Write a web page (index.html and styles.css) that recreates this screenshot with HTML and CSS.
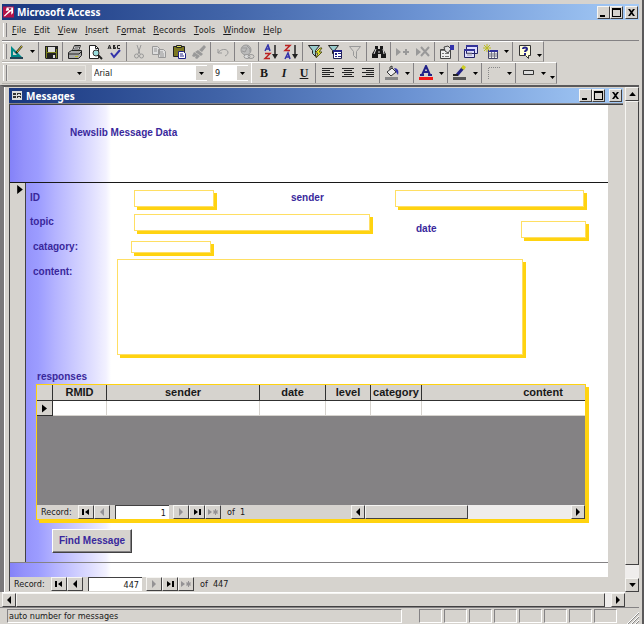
FILE: index.html
```html
<!DOCTYPE html>
<html lang="en">
<head>
<meta charset="utf-8">
<title>Microsoft Access</title>
<link rel="stylesheet" href="styles.css">
</head>
<body>
<svg class="defs" aria-hidden="true">
  <symbol id="down" viewBox="0 0 5 3"><path d="M0 0h5L2.500 3z"/></symbol>
  <symbol id="first" viewBox="0 0 10 8"><path d="M1 1h2v6H1zM8 1v6L4 4z"/></symbol>
  <symbol id="prev" viewBox="0 0 10 8"><path d="M7 0v8L3 4z"/></symbol>
  <symbol id="next" viewBox="0 0 10 8"><path d="M3 0v8l4-4z"/></symbol>
  <symbol id="last" viewBox="0 0 10 8"><path d="M2 1v6l4-3zM7 1h2v6H7z"/></symbol>
  <symbol id="new" viewBox="0 0 10 8"><path d="M0 1v6l4-3zM7 1h1v2l1-1 1 1-1 1 1 1-1 1-1-1v2H7V5L6 6 5 5l1-1-1-1 1-1 1 1z"/></symbol>
  <symbol id="min" viewBox="0 0 9 9"><path d="M1 7h5v2H1z"/></symbol>
  <symbol id="max" viewBox="0 0 9 9"><path d="M0 0h9v9H0zM1 2v6h7V2z" fill-rule="evenodd"/></symbol>
  <symbol id="close" viewBox="0 0 9 9"><path d="M1 1h2l1.500 2L6 1h2L5.500 4.500 8 8H6L4.500 6 3 8H1l2.500-3.500z"/></symbol>
</svg>

<header class="titlebar">
  <svg class="app-icon" viewBox="0 0 12 12"><path fill="#b51248" d="M0 0h12v12H0z"/><path fill="#fff" d="M4 1h7v6L9 9V5L4 9 2 11 1 10l6-6-4 1z"/><path fill="#8c0834" d="M6 2h3v1L7 4z"/></svg>
  <h1>Microsoft Access</h1>
  <div class="winbtns">
    <button aria-label="Minimize"><svg><use href="#min"/></svg></button><button aria-label="Maximize"><svg><use href="#max"/></svg></button><button class="x" aria-label="Close"><svg><use href="#close"/></svg></button>
  </div>
</header>

<nav class="menu">
  <button><u>F</u>ile</button><button><u>E</u>dit</button><button><u>V</u>iew</button><button><u>I</u>nsert</button><button>F<u>o</u>rmat</button><button><u>R</u>ecords</button><button><u>T</u>ools</button><button><u>W</u>indow</button><button><u>H</u>elp</button>
</nav>

<div class="toolbar" role="toolbar" aria-label="Form view">
  <div class="group">
    <button aria-label="View"><svg viewBox="0 0 16 16"><path fill="#088" d="M2 2v11h11zM4 7l4 4H4z" fill-rule="evenodd"/><path fill="#245" d="M1 13h13v2H1z"/><path stroke="#222" stroke-width="2" d="M7 9l6-7"/><path stroke="#dc3" d="M8 8l5-6"/></svg></button>
    <button class="drop" aria-label="View options"><svg><use href="#down"/></svg></button>
  </div>
  <div class="group">
    <button aria-label="Save"><svg viewBox="0 0 16 16"><path fill="#222" d="M2 2h13v13H3l-1-1z"/><path fill="#7d8420" d="M3 3h1v11H3zM13 5h1v9h-1zM4 8h9v1H4z"/><path fill="#ddd" d="M5 3h7v5H5zM10 11h2v3h-2z"/></svg></button>
  </div>
  <div class="group">
    <button aria-label="Print"><svg viewBox="0 0 16 16"><path fill="#fff" stroke="#222" d="M5.500 6.500l2-5h6l-2 5"/><path fill="#aaa" stroke="#222" d="M1.500 8.500l3-2h10v5l-3 3h-10z"/><path stroke="#222" d="M2 10h10l2-2M8 3h4M7 5h4" fill="none"/><path fill="#bb2" d="M8 12h3v1H8z"/></svg></button>
    <button aria-label="Print Preview"><svg viewBox="0 0 16 16"><path fill="#fff" stroke="#222" d="M2.500 1.500h6l3 3v10h-9z"/><path d="M8.500 1.500v3h3" fill="none" stroke="#222"/><circle cx="9" cy="9" r="3" fill="#9dd" stroke="#333"/><path stroke="#222" stroke-width="2" d="M11 11l4 4"/></svg></button>
    <button aria-label="Spelling"><svg viewBox="0 0 16 16"><path fill="none" stroke="#222" d="M1 5l1.500-4L4 5M2 4h2M6.500 1v4M6 1.500h2L7 3l2 1-1 .500H6M13 1.500h-2.500v3H13"/><path fill="none" stroke="#33a" stroke-width="2" d="M4 9l3 4 6-7"/></svg></button>
  </div>
  <div class="group">
    <button aria-label="Cut" disabled><svg viewBox="0 0 16 16" fill="none" stroke="#999"><path d="M6 1l3 9M10 1L7 10"/><circle cx="5.500" cy="12" r="2"/><circle cx="10.500" cy="12" r="2"/></svg></button>
    <button aria-label="Copy" disabled><svg viewBox="0 0 16 16" fill="#ddd" stroke="#999"><path d="M1.500 2.500h5l2 2v6h-7zM7.500 5.500h5l2 2v6h-7z"/><path d="M3 5h3M3 7h3M9 8h3M9 10h4M9 12h4"/></svg></button>
    <button aria-label="Paste"><svg viewBox="0 0 16 16"><path fill="#7b7720" stroke="#222" d="M2.500 2.500h11v10h-11z"/><path fill="#dd5" stroke="#222" d="M5.500 3.500v-2h5v2z"/><path fill="#fff" stroke="#228" d="M7.500 7.500h5l2 2v5h-7z"/><path stroke="#228" d="M9 10h3M9 12h4"/></svg></button>
    <button aria-label="Format Painter" disabled><svg viewBox="0 0 16 16"><path fill="#999" d="M13 1l2 2-4 5-3-2zM7 6l5 4-2 2-6-4zM3 8l6 4-3 3-2-1 1-2-2 1-2-1z"/></svg></button>
  </div>
  <div class="group">
    <button aria-label="Undo" disabled><svg viewBox="0 0 16 16"><path fill="none" stroke="#999" stroke-width="1" d="M3 9c2-4 9-5 10-1 0 2-1 3-3 4M3 5v4h4"/></svg></button>
  </div>
  <div class="group">
    <button aria-label="Insert Hyperlink" disabled><svg viewBox="0 0 16 16" fill="none" stroke="#999"><circle cx="7" cy="6" r="5" fill="#bbb"/><path d="M3 4h5l-2 4-3-1M8 2l3 3v3"/><ellipse cx="8" cy="12.500" rx="3" ry="2" fill="#ddd"/><ellipse cx="12" cy="12.500" rx="3" ry="2"/></svg></button>
  </div>
  <div class="group">
    <button aria-label="Sort Ascending"><svg viewBox="0 0 16 16" fill="none"><path stroke="#33a" stroke-width="1.500" d="M2 7l3-6 2 6M3 5h4"/><path stroke="#b22" stroke-width="1.500" d="M2 9.500h5L2 14.500h5"/><path stroke="#222" stroke-width="1.500" d="M12 1v12"/><path fill="#222" d="M9 10h6l-3 5z"/></svg></button>
    <button aria-label="Sort Descending"><svg viewBox="0 0 16 16" fill="none"><path stroke="#b22" stroke-width="1.500" d="M2 1.500h5L2 6.500h5"/><path stroke="#33a" stroke-width="1.500" d="M2 15l3-6 2 6M3 13h4"/><path stroke="#222" stroke-width="1.500" d="M12 1v12"/><path fill="#222" d="M9 10h6l-3 5z"/></svg></button>
  </div>
  <div class="group">
    <button aria-label="Filter By Selection"><svg viewBox="0 0 16 16"><path fill="#9cc" stroke="#222" d="M1.500 1.500h11l-4 5v6l-3-3v-3z"/><path fill="#ee2" stroke="#552" d="M13 4l-5 5h3l-2 5 6-6h-3l3-4z"/></svg></button>
    <button aria-label="Filter By Form"><svg viewBox="0 0 16 16"><path fill="#9cc" stroke="#222" d="M1.500 1.500h10l-4 5v5l-2-2v-3z"/><path fill="#fff" stroke="#225" d="M6.500 6.500h8v8h-8z"/><path fill="#228" d="M6 6h9v2H6zM8 9h2v2H8zM11 9h3v1h-3zM8 12h2v1H8zM11 12h3v1h-3z"/></svg></button>
    <button aria-label="Apply Filter" disabled><svg viewBox="0 0 16 16"><path fill="none" stroke="#999" d="M2.500 2.500h11l-4 5v7l-3-3v-4z"/></svg></button>
  </div>
  <div class="group">
    <button aria-label="Find"><svg viewBox="0 0 16 16"><path fill="#181818" d="M4 2h3v3h2V2h3v3l3 5v4h-5v-4H7v4H1v-4l3-5z"/><path stroke="#ddd" d="M5 5L3 10M12 5l1 5M8 7v2"/></svg></button>
  </div>
  <div class="group">
    <button aria-label="New Record" disabled><svg viewBox="0 0 16 16" fill="#999"><path d="M1 4v8l5-4zM8 7h2V5h2v2h2v2h-2v2h-2V9H8z"/></svg></button>
    <button aria-label="Delete Record" disabled><svg viewBox="0 0 16 16" fill="#999"><path d="M1 4v8l5-4z"/><path stroke="#999" stroke-width="2" d="M6 3l8 9M14 3l-8 9"/></svg></button>
  </div>
  <div class="group">
    <button aria-label="Properties"><svg viewBox="0 0 16 16"><path fill="#eee" stroke="#444" d="M1.500 5.500h10v9h-10z"/><path fill="#777" d="M2 6h9v1H2zM3 9h2v1H3zM6 9h4v1H6zM3 12h2v1H3zM6 12h4v1H6z"/><path fill="#ddd" stroke="#444" d="M5 3l4-1 3 3-3 4-3-2z"/><path fill="#33a" d="M11 1h4v5h-4z"/></svg></button>
  </div>
  <div class="group">
    <button aria-label="Database Window"><svg viewBox="0 0 16 16"><path fill="#ddf" stroke="#226" d="M3.500 1.500h11v8h-11zM1.500 5.500h10v8h-10z"/><path fill="#339" d="M3 1h12v2H3zM1 5h11v2H1z"/><path stroke="#999" d="M4 9h5M4 11h5"/></svg></button>
    <button aria-label="New Object"><svg viewBox="0 0 16 16"><path fill="#eee" stroke="#446" d="M5.500 6.500h9v8h-9z"/><path fill="#339" d="M5 6h10v2H5z"/><path stroke="#778" d="M6 10h8M6 12h8M8.500 8v6M11.500 8v6"/><path stroke="#bb2" d="M4 0v8M0 4h8M1 1l6 6M7 1L1 7"/></svg></button>
    <button class="drop" aria-label="New Object options"><svg><use href="#down"/></svg></button>
  </div>
  <div class="group">
    <button aria-label="Help"><svg viewBox="0 0 16 16"><path fill="#ffffd8" stroke="#333" d="M2.500 1.500h11v10h-2v3l-3-3h-6z"/><path fill="none" stroke="#228" stroke-width="2" d="M6 5c0-2 4-2 4 0S8 6 8 8"/><path fill="#228" d="M7 9h2v2H7z"/></svg></button>
    <button class="drop more" aria-label="More Buttons"><svg><use href="#down"/></svg></button>
  </div>
</div>

<div class="toolbar" role="toolbar" aria-label="Formatting">
  <label class="combo object"><select aria-label="Object"><option></option></select><svg><use href="#down"/></svg></label>
  <label class="combo font"><select aria-label="Font"><option>Arial</option></select><svg><use href="#down"/></svg></label>
  <label class="combo size"><select aria-label="Font Size"><option>9</option></select><svg><use href="#down"/></svg></label>
  <div class="group lead">
    <button class="letter">B</button><button class="letter"><i>I</i></button><button class="letter"><u>U</u></button>
  </div>
  <div class="group">
    <button aria-label="Align Left"><svg viewBox="0 0 16 16"><path stroke="#222" d="M2 3.500h12M2 5.500h8M2 7.500h12M2 9.500h8M2 11.500h12"/></svg></button>
    <button aria-label="Center"><svg viewBox="0 0 16 16"><path stroke="#222" d="M2 3.500h12M4 5.500h8M2 7.500h12M4 9.500h8M2 11.500h12"/></svg></button>
    <button aria-label="Align Right"><svg viewBox="0 0 16 16"><path stroke="#222" d="M2 3.500h12M6 5.500h8M2 7.500h12M6 9.500h8M2 11.500h12"/></svg></button>
  </div>
  <div class="group">
    <button aria-label="Fill Color"><svg viewBox="0 0 16 16"><path fill="#eee" stroke="#333" d="M3 7l5-4 4 4-5 4zM6 5V2l2-1v3"/><path fill="#33a" d="M10 3c4 0 5 3 4 7l-2-3z"/><path fill="#888" d="M1 12h13v3H1z"/></svg></button>
    <button class="drop" aria-label="Fill options"><svg><use href="#down"/></svg></button>
  </div>
  <div class="group">
    <button aria-label="Font Color"><svg viewBox="0 0 16 16"><path fill="none" stroke="#228" stroke-width="2" d="M4 10l4-9 4 9M6 7h4M2 10h4M10 10h4"/><path fill="#f01818" d="M1 12h14v3H1z"/></svg></button>
    <button class="drop" aria-label="Font color options"><svg><use href="#down"/></svg></button>
  </div>
  <div class="group">
    <button aria-label="Line Color"><svg viewBox="0 0 16 16"><path stroke="#228" stroke-width="3" d="M5 10l6-7"/><path stroke="#222" stroke-width="2" d="M1 10h5"/><path fill="#cc2" d="M11 0l3 2-2 3-3-2z"/><path fill="#555" d="M1 12h13v3H1z"/></svg></button>
    <button class="drop" aria-label="Line color options"><svg><use href="#down"/></svg></button>
  </div>
  <div class="group">
    <button aria-label="Border Width"><svg viewBox="0 0 16 16"><path fill="none" stroke="#888" stroke-dasharray="1 1" d="M2.500 14V2.500H14"/></svg></button>
    <button class="drop" aria-label="Border options"><svg><use href="#down"/></svg></button>
  </div>
  <div class="group">
    <button aria-label="Special Effect"><svg viewBox="0 0 16 16"><path fill="#ddd" stroke="#333" d="M3.500 5.500h10v4h-10z"/></svg></button>
    <button class="drop" aria-label="Effect options"><svg><use href="#down"/></svg></button>
    <button class="drop more" aria-label="More Buttons"><svg><use href="#down"/></svg></button>
  </div>
</div>

<div class="workspace">
  <main class="window">
    <header class="titlebar inner">
      <svg class="form-icon" viewBox="0 0 10 9"><path fill="#ddd" d="M0 0h10v9H0z"/><path fill="#333" d="M1 2h3v2H1zM5 2h4v2H5zM1 5h3v2H1zM5 5h4v2H5z"/><path fill="#ddd" d="M6 3h2v1H6zM6 6h2v1H6z"/></svg>
      <h2>Messages</h2>
      <div class="winbtns">
        <button aria-label="Minimize"><svg><use href="#min"/></svg></button><button aria-label="Maximize"><svg><use href="#max"/></svg></button><button class="x" aria-label="Close"><svg><use href="#close"/></svg></button>
      </div>
    </header>
    <div class="client">
      <form class="form">
        <div class="form-header">Newslib Message Data</div>
        <div class="detail">
          <div class="selector"><svg viewBox="0 0 5 8"><path d="M0 0v8l5-4z"/></svg></div>
          <div class="fields">
            <div class="row ids">
              <label for="id">ID</label><input id="id">
              <label class="second" for="sender">sender</label><input id="sender">
            </div>
            <div class="row topics">
              <label for="topic">topic</label><input id="topic">
              <label class="date" for="date">date</label><input class="date" id="date">
            </div>
            <div class="row category">
              <label for="cat">catagory:</label><input id="cat">
            </div>
            <div class="row content">
              <label for="content">content:</label><textarea id="content"></textarea>
            </div>
            <h3>responses</h3>
            <section class="subform">
              <div class="sheet">
                <table>
                  <colgroup><col class="c-sel"><col class="c-id"><col class="c-sender"><col class="c-date"><col class="c-level"><col class="c-cat"><col class="c-content"></colgroup>
                  <thead><tr><th></th><th>RMID</th><th>sender</th><th>date</th><th>level</th><th>category</th><th>content</th></tr></thead>
                  <tbody><tr><th><svg viewBox="0 0 5 8"><path d="M0 0v8l5-4z"/></svg></th><td></td><td></td><td></td><td></td><td></td><td></td></tr></tbody>
                </table>
              </div>
              <div class="recnav">
                <label for="rec1">Record:</label>
                <button type="button" aria-label="First"><svg><use href="#first"/></svg></button><button type="button" aria-label="Previous" disabled><svg><use href="#prev"/></svg></button>
                <input id="rec1" value="1">
                <button type="button" aria-label="Next" disabled><svg><use href="#next"/></svg></button><button type="button" aria-label="Last"><svg><use href="#last"/></svg></button><button type="button" aria-label="New" disabled><svg><use href="#new"/></svg></button>
                <span class="of">of&nbsp; 1</span>
                <div class="hscroll">
                  <button type="button" aria-label="Scroll left"><svg><use href="#prev"/></svg></button><div class="thumb"></div><div class="track"></div><button type="button" aria-label="Scroll right"><svg><use href="#next"/></svg></button>
                </div>
              </div>
            </section>
            <button type="button" class="find">Find Message</button>
          </div>
        </div>
        <div class="form-footer"></div>
      </form>
      <div class="recnav outer">
        <label for="rec2">Record:</label>
        <button aria-label="First"><svg><use href="#first"/></svg></button><button aria-label="Previous"><svg><use href="#prev"/></svg></button>
        <input id="rec2" value="447">
        <button aria-label="Next" disabled><svg><use href="#next"/></svg></button><button aria-label="Last"><svg><use href="#last"/></svg></button><button aria-label="New" disabled><svg><use href="#new"/></svg></button>
        <span class="of">of&nbsp; 447</span>
      </div>
    </div>
  </main>
  <div class="vscroll">
    <button aria-label="Scroll up"><svg class="flip"><use href="#down"/></svg></button><div class="thumb"></div><div class="track"></div><button aria-label="Scroll down"><svg><use href="#down"/></svg></button>
  </div>
</div>
<div class="hscroll bottom">
  <button aria-label="Scroll left"><svg><use href="#prev"/></svg></button><div class="thumb"></div><div class="track"></div><button aria-label="Scroll right"><svg><use href="#next"/></svg></button>
</div>

<footer class="status">
  <div class="message">auto number for messages</div>
  <div class="cells"><i></i><i></i><i></i><i></i><i></i><i></i><i></i><i></i></div>
  <svg class="grip" viewBox="0 0 12 12"><path stroke="#888" stroke-width="1" d="M1 12L12 1M5 12l7-7M9 12l3-3"/><path stroke="#fff" stroke-width="1" d="M0 12L12 0M4 12l8-8M8 12l4-4"/></svg>
</footer>
</body>
</html>
```

FILE: styles.css
```css
:root {
  --face: #d6d3ce;
  --light: #f6f5f2;
  --shade: #848284;
  --dark: #424142;
  --navy: #39289c;
  --gold: #ffd310;
  --title: linear-gradient(90deg, #19377f 0, #4164a8 35%, #6b92d2 65%, #a5cbf7 100%);
}
* { box-sizing: border-box; }
body {
  margin: 0;
  min-height: 100vh;
  display: flex;
  flex-direction: column;
  padding: 4px 3px 0 2px;
  border-right: 2px solid #5a595a;
  background: var(--face);
  color: #181818;
  font: 10px/12px "DejaVu Sans Condensed", "DejaVu Sans", sans-serif;
}
.defs { display: none; }
button, input, select, textarea { margin: 0; padding: 0; font: inherit; color: inherit; border-radius: 0; }
button { display: flex; align-items: center; justify-content: center; border: 0; background: none; }

/* Title bars */
.titlebar {
  display: flex;
  align-items: center;
  height: 16px;
  padding: 0 1px;
  gap: 3px;
  background: var(--title);
  color: #fff;
}
.titlebar h1, .titlebar h2 { flex: 1; margin: 0; font: bold 10px/14px "Noto Sans", sans-serif; }
.app-icon { width: 11px; height: 12px; }
.form-icon { width: 10px; height: 9px; }
.winbtns { display: flex; }
.winbtns button, .recnav button, .hscroll button, .vscroll button, .thumb {
  background: var(--face);
  border: 1px solid;
  border-color: var(--light) var(--dark) var(--dark) var(--light);
}
.winbtns button { width: 13px; height: 13px; }
.winbtns svg { width: 9px; height: 9px; }
.winbtns .x { margin-left: 2px; }

/* Menu */
.menu { display: flex; align-items: center; gap: 8px; height: 21px; padding-left: 8px; border-bottom: 1px solid var(--shade); font-size: 9px; }
.menu::before { content: ""; width: 2px; height: 14px; margin: 0 -3px 0 -7px; border-left: 1px solid #fff; border-right: 1px solid var(--shade); }
.menu u { text-underline-offset: 1px; }

/* Toolbars */
.toolbar {
  display: flex;
  align-self: flex-start;
  align-items: stretch;
  height: 21px;
  padding-left: 3px;
  border-top: 1px solid #fff;
  border-right: 1px solid var(--shade);
  border-bottom: 1px solid #b5b2ad;
}
.toolbar + .toolbar { height: 22px; }
.toolbar::before { content: ""; width: 2px; margin: 2px 0 2px -2px; border-left: 1px solid #fff; border-right: 1px solid var(--shade); }
.group { display: flex; padding-right: 1px; margin-right: 1px; border-right: 1px solid var(--shade); }
.group + .group { padding-left: 1px; }
.group.lead { padding-left: 2px; }
.group:last-child { margin: 0; padding-right: 0; border: 0; }
.group button { width: 20px; }
.group svg { width: 16px; height: 16px; }
.group .drop { width: 10px; }
.group .drop svg { width: 5px; height: 3px; }
.group .drop.more { width: 8px; padding-top: 8px; }
.group .letter { font: bold 12px/14px "Liberation Serif", serif; }
.combo { display: grid; align-items: center; justify-items: end; margin: 2px 6px 2px 0; background: #fff; }
.combo select, .combo svg { grid-area: 1 / 1; }
.combo select { width: 100%; height: 100%; padding-left: 2px; appearance: none; border: 0; background: none; font-size: 9px; }
.combo svg { width: 11px; height: 14px; padding: 6px 3px 5px; background: var(--face); pointer-events: none; }
.combo.object { width: 79px; background: var(--face); border: 1px solid #e7e5e0; }
.combo.font { width: 115px; }
.combo.size { width: 35px; margin-right: 3px; }
.combo.size + .group { border-left: 1px solid #fff; }

/* Workspace */
.workspace { flex: 1; display: flex; margin: 1px 0 0 -2px; border-left: 4px solid #7b797b; border-top: 2px solid #5a595a; }
.window { flex: 1; min-width: 0; display: flex; flex-direction: column; padding: 1px 2px 1px 4px; border-left: 1px solid #fff; }
.inner { padding: 0 1px 0 3px; gap: 4px; border-bottom: 1px solid var(--shade); }
.inner .x { margin-left: 4px; }
.client { flex: 1; display: flex; flex-direction: column; padding-right: 15px; border-left: 1px solid var(--dark); border-top: 1px solid var(--dark); }
.form {
  flex: 1;
  display: flex;
  flex-direction: column;
  background: linear-gradient(90deg, #8482f8 0, #9492fb 14px, #9c9cff 28px, #b4b3ff 45px, #cccbff 65px, #e0dfff 82px, #f2f1ff 96px, #fff 101px);
  font: bold 10px/12px "Liberation Sans", sans-serif;
  color: var(--navy);
}
.form-header { height: 78px; padding: 22px 0 0 60px; border-bottom: 1px solid #181818; }
.detail { flex: 1; display: flex; border-bottom: 1px solid var(--shade); }
.selector { width: 16px; padding: 2px 0 0 7px; background: var(--face); border-right: 1px solid var(--dark); color: #000; }
.selector svg { display: block; width: 6px; height: 9px; }
.form-footer { height: 14px; }
.fields { flex: 1; min-width: 0; padding: 7px 22px 0 4px; }
.row { display: grid; align-items: start; }
.row input, .row textarea {
  display: block;
  width: 100%;
  height: 17px;
  border: 1px solid #ffdf63;
  background: #fff;
  box-shadow: 3px 3px 0 var(--gold);
  resize: none;
}
.row label { padding-top: 2px; }
.ids { grid-template-columns: 104px 80px 77px 104px 1fr; margin: 0 2px 7px 0; }
.ids .second { grid-column: 4; }
.topics { grid-template-columns: 104px 236px 46px 1fr 65px; margin-bottom: 3px; }
.topics label.date { grid-column: 4; padding-top: 9px; }
.topics input.date { margin-top: 7px; }
.category { grid-template-columns: 98px 80px; margin: 0 0 6px 3px; }
.category input { height: 12px; }
.category label { padding: 0; }
.content { grid-template-columns: 84px 1fr; margin: 0 63px 0 3px; }
.content label { padding-top: 7px; }
.content textarea { height: 96px; }
.fields h3 { margin: 16px 0 1px 7px; font: inherit; }
.subform { margin: 0 0 0 6px; border: 1px solid var(--gold); box-shadow: 3px 3px 0 var(--gold); }
.sheet { height: 120px; overflow: hidden; background: var(--shade); }
table { width: 628px; table-layout: fixed; border-collapse: separate; border-spacing: 0; color: #181818; }
th, td { height: 15px; padding: 0; border-right: 1px solid #d6d3ce; border-bottom: 1px solid var(--face); background: #fff; }
th { height: 16px; background: var(--face); border-color: #303030; font: bold 11px/13px "Liberation Sans", sans-serif; }
tbody th { height: 15px; }
tbody svg { display: block; width: 5px; height: 9px; margin: auto; }
.c-sel { width: 16px; }
.c-id { width: 54px; }
.c-sender { width: 153px; }
.c-date { width: 66px; }
.c-level { width: 45px; }
.c-cat { width: 51px; }
.c-content { width: 243px; }
.find {
  width: 80px;
  height: 24px;
  margin: 9px 0 9px 22px;
  background: var(--face);
  border: 1px solid;
  border-color: #fff var(--dark) var(--dark) #fff;
  box-shadow: inset -1px -1px 0 var(--shade);
}

/* Record navigation */
.recnav { display: flex; height: 14px; padding-left: 4px; background: var(--face); color: #181818; font: 9px/14px "DejaVu Sans Condensed", "DejaVu Sans", sans-serif; }
.recnav label { width: 37px; }
.recnav button { width: 16px; height: 14px; }
.recnav svg { width: 10px; height: 8px; }
.recnav button:disabled svg { fill: #949294; }
.recnav input { width: 54px; height: 14px; margin: 0 4px 0 5px; padding-right: 3px; border: 1px solid var(--dark); border-width: 1px 0 0 1px; text-align: right; }
.recnav .of { margin-left: 6px; }

/* Scroll bars */
.hscroll { display: flex; height: 14px; }
.recnav .hscroll { width: 43%; margin-left: auto; }
.hscroll button { width: 14px; height: 14px; }
.hscroll svg { width: 10px; height: 8px; }
.thumb { width: 44%; }
.track { flex: 1; background: #efedec; }
.bottom { margin-right: 14px; border-top: 1px solid #fff; height: 15px; }
.bottom .thumb { width: auto; flex: 1; }
.bottom .track { flex: 0 0 6px; }
.vscroll { width: 14px; display: flex; flex-direction: column; }
.vscroll button { width: 14px; height: 14px; }
.vscroll svg { width: 7px; height: 4px; }
.vscroll .flip { transform: rotate(180deg); }
.vscroll .thumb { width: 14px; flex: 1; }
.vscroll .track { flex: 0 0 13px; }

/* Status bar */
.status { display: flex; align-items: center; height: 17px; margin-left: -2px; padding-left: 7px; border-top: 1px solid var(--shade); font-size: 9px; }
.message { flex: 1; height: 14px; padding-left: 1px; line-height: 13px; border: 1px solid; border-color: var(--shade) #fff #fff var(--shade); }
.cells { display: grid; grid-template-columns: repeat(8, 23px); gap: 2px; margin: 0 10px 0 17px; }
.cells i { height: 14px; border: 1px solid; border-color: var(--shade) #fff #fff var(--shade); }
.grip { width: 12px; height: 12px; align-self: flex-end; }
```
